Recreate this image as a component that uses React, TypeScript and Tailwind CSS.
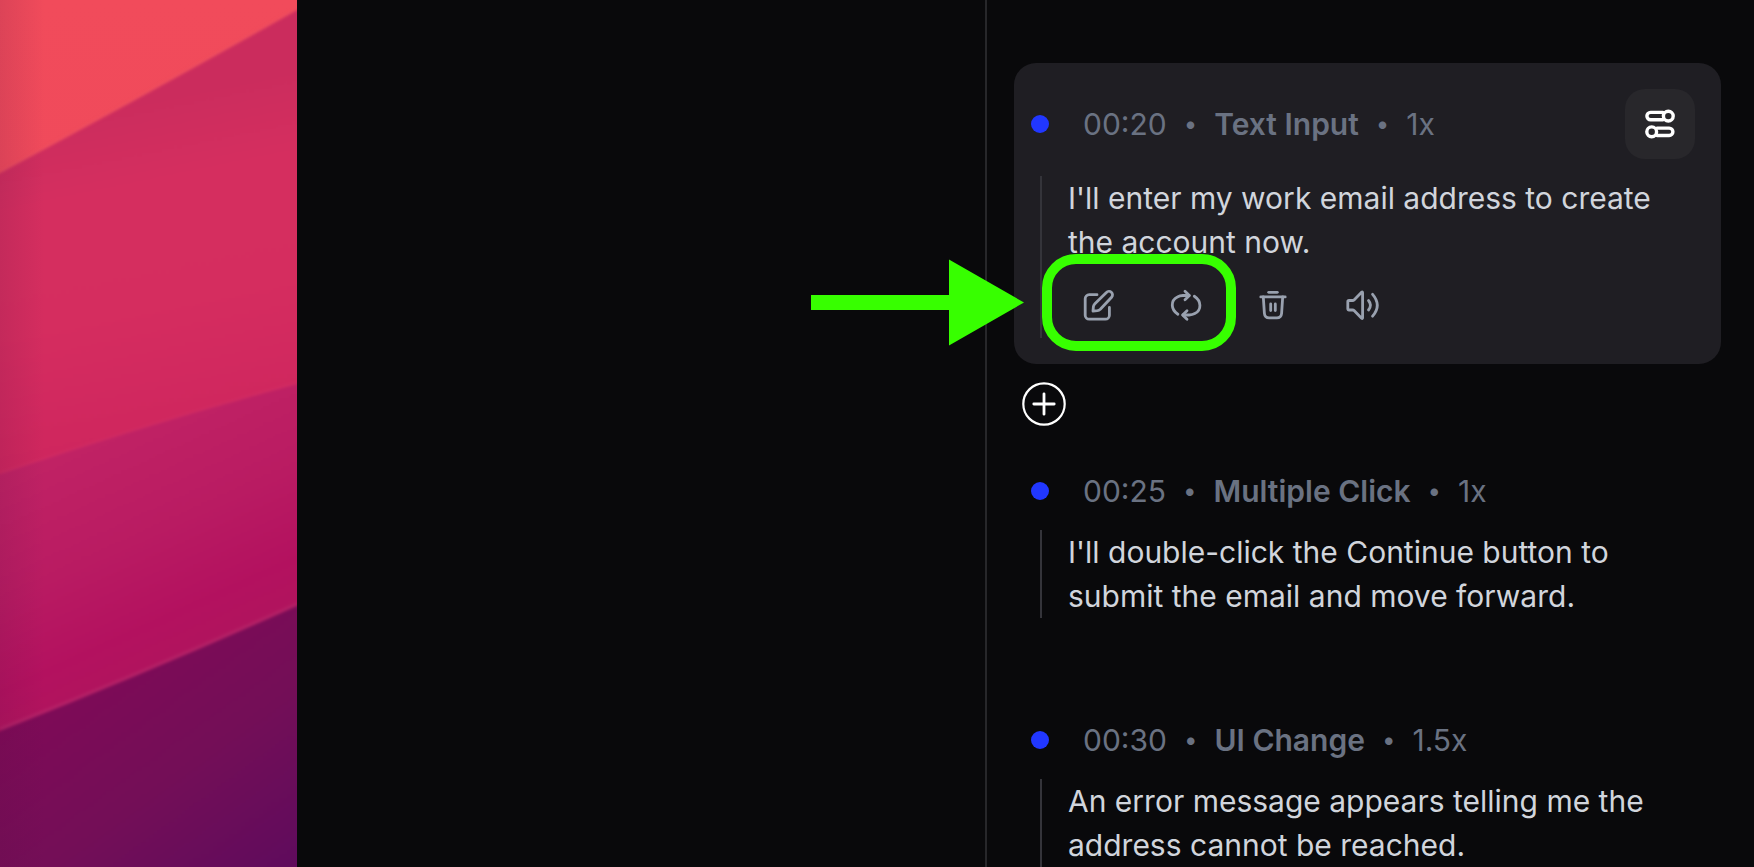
import type { ReactNode } from "react";

type Step = {
  time: string;
  kind: string;
  speed: string;
  text: string;
};

const steps: Step[] = [
  { time: "00:20", kind: "Text Input", speed: "1x", text: "I'll enter my work email address to create the account now." },
  { time: "00:25", kind: "Multiple Click", speed: "1x", text: "I'll double-click the Continue button to submit the email and move forward." },
  { time: "00:30", kind: "UI Change", speed: "1.5x", text: "An error message appears telling me the address cannot be reached." },
];

function Wallpaper() {
  return (
    <svg className="block h-full w-full" viewBox="0 0 297 867" preserveAspectRatio="none" aria-hidden="true">
      <defs>
        <linearGradient id="coral" x1="0" y1="0" x2="0" y2="1">
          <stop offset="0" stopColor="#f14b5b" />
          <stop offset="1" stopColor="#ec465b" />
        </linearGradient>
        <linearGradient id="rose" gradientUnits="userSpaceOnUse" x1="120" y1="108" x2="185" y2="425">
          <stop offset="0" stopColor="#cb2c5d" />
          <stop offset="0.25" stopColor="#d52e5f" />
          <stop offset="0.6" stopColor="#d52d5f" />
          <stop offset="1" stopColor="#cf265e" />
        </linearGradient>
        <linearGradient id="magenta" gradientUnits="userSpaceOnUse" x1="90" y1="440" x2="190" y2="660">
          <stop offset="0" stopColor="#c02264" />
          <stop offset="0.45" stopColor="#b91b62" />
          <stop offset="0.8" stopColor="#b3115f" />
          <stop offset="1" stopColor="#b0145d" />
        </linearGradient>
        <linearGradient id="plum" gradientUnits="userSpaceOnUse" x1="90" y1="670" x2="250" y2="890">
          <stop offset="0" stopColor="#7e0a57" />
          <stop offset="0.5" stopColor="#730e57" />
          <stop offset="1" stopColor="#600b5c" />
        </linearGradient>
        <linearGradient id="shade" x1="0" y1="0" x2="1" y2="0">
          <stop offset="0" stopColor="#501040" stopOpacity="0.13" />
          <stop offset="0.15" stopColor="#501040" stopOpacity="0" />
        </linearGradient>
        <filter id="soften" x="-5%" y="-5%" width="110%" height="110%" colorInterpolationFilters="sRGB">
          <feGaussianBlur stdDeviation="1.4" />
        </filter>
      </defs>
      <rect width="297" height="867" fill="url(#coral)" />
      <g filter="url(#soften)">
        <path d="M-20 184 L0 173 Q148 94 297 10 L320 -3 V900 H-20Z" fill="url(#rose)" />
        <path d="M-20 479 L0 474 Q155 422 297 384 L320 378 V900 H-20Z" fill="url(#magenta)" />
        <path d="M-20 739 L0 731 Q150 672 297 606 L320 595 V900 H-20Z" fill="url(#plum)" />
        <path d="M0 172 Q148 93 297 9" fill="none" stroke="#f06070" strokeOpacity="0.25" strokeWidth="2" />
        <path d="M0 473 Q155 421 297 383" fill="none" stroke="#e0487a" strokeOpacity="0.2" strokeWidth="2" />
        <path d="M0 729 Q150 670 297 604" fill="none" stroke="#c0407a" strokeOpacity="0.35" strokeWidth="3" />
      </g>
      <rect width="297" height="867" fill="url(#shade)" />
    </svg>
  );
}

function Icon({ children }: { children: ReactNode }) {
  return (
    <svg
      className="size-9"
      viewBox="0 0 36 36"
      fill="none"
      stroke="currentColor"
      strokeWidth="2.8"
      strokeLinecap="round"
      strokeLinejoin="round"
      aria-hidden="true"
    >
      {children}
    </svg>
  );
}

function SettingsIcon() {
  return (
    <Icon>
      <g strokeWidth="3.4">
        <path d="M21 6.4 H8.6 A3.7 3.7 0 0 0 8.6 13.8 H21" />
        <circle cx="26.3" cy="10.1" r="4.9" />
        <path d="M15 22.1 H27.2 A3.7 3.7 0 0 1 27.2 29.5 H15" />
        <circle cx="9.7" cy="25.8" r="4.9" />
      </g>
    </Icon>
  );
}

function EditIcon() {
  return (
    <Icon>
      <path d="M17 7.7 H9.2 A4 4 0 0 0 5.2 11.7 V28.2 A4 4 0 0 0 9.2 32.2 H25.4 A4 4 0 0 0 29.4 28.2 V20.5" />
      <path d="M26.4 5.5 A3.3 3.3 0 0 1 31.6 10.2 L20.3 22.2 Q19 23.4 17.4 23.6 L13 24 L13.4 19.6 Q13.7 18 14.9 16.8Z" />
    </Icon>
  );
}

function RegenerateIcon() {
  return (
    <Icon>
      <path d="M9.9 27.3 C2.6 22.6 2.4 13.4 9.4 9.9 Q11.8 8.6 15 8.5 H21" />
      <path d="M17 4.3 L21.4 8.5 L17 12.8" />
      <path d="M26.3 9.2 C33.6 13.9 33.8 23.1 26.8 26.6 Q24.4 27.9 21.2 28 H15" />
      <path d="M19 23.8 L14.6 28 L19 32.3" />
    </Icon>
  );
}

function TrashIcon() {
  return (
    <Icon>
      <path d="M12.7 5.3 H21.3" />
      <path d="M4.8 9.9 H29.2" />
      <path d="M7.3 10 L8.4 26.4 Q8.8 30.9 13.2 30.9 H20.8 Q25.2 30.9 25.6 26.4 L26.7 10" />
      <path d="M14.7 17 V23.6 M19.3 17 V23.6" />
    </Icon>
  );
}

function SpeakerIcon() {
  return (
    <Icon>
      <path d="M5 13.5 H8.5 Q9.5 13.5 10.3 12.7 L17.6 5.2 Q18.6 4.4 18.6 5.7 V30.8 Q18.6 32 17.6 31.2 L10.3 23.8 Q9.5 23 8.5 23 H5 Q3.8 23 3.8 21.8 V14.7 Q3.8 13.5 5 13.5Z" />
      <path d="M24.5 13.5 Q28.4 18.2 24.5 23" />
      <path d="M28.6 7.3 Q38 18.2 28.6 29.2" />
    </Icon>
  );
}

function Separator() {
  return <span className="text-2xl">•</span>;
}

function StepHeader({ step, tall }: { step: Step; tall?: boolean }) {
  return (
    <header className={tall ? "flex h-[70px] items-center" : "flex h-11 items-center"}>
      <span className="size-[18px] shrink-0 rounded-full bg-[#2137ff]" />
      <div className="ml-[34px] flex grow items-center gap-[17px] text-[30px] leading-[44px] text-gray-500">
        <time>{step.time}</time>
        <Separator />
        <h2 className="font-semibold">{step.kind}</h2>
        <Separator />
        <span>{step.speed}</span>
      </div>
      {tall && (
        <button
          type="button"
          aria-label="Step settings"
          className="flex size-[70px] items-center justify-center rounded-[20px] bg-[#28272b] text-white"
        >
          <SettingsIcon />
        </button>
      )}
    </header>
  );
}

function Action({ label, children }: { label: string; children: ReactNode }) {
  return (
    <button type="button" aria-label={label} className="flex h-full w-[88px] items-center justify-center">
      {children}
    </button>
  );
}

function Callout() {
  return (
    <div className="pointer-events-none absolute -top-2.5 left-0 h-[97px] w-[194px] rounded-[34px] border-10 border-[#37ff00]">
      <svg
        className="absolute top-[-5px] right-[202px] h-[87px] w-[213px]"
        viewBox="0 0 213 87"
        fill="#37ff00"
        aria-hidden="true"
      >
        <path d="M0 36 H138 V0.5 L213 43.5 L138 86.5 V51 H0Z" />
      </svg>
    </div>
  );
}

function StepBody({ step, editable }: { step: Step; editable?: boolean }) {
  return (
    <div className="relative mt-[17px] ml-[9px] border-l-2 border-[#34343a]">
      <p className="max-w-[620px] pl-[26px] text-[30px] leading-[44px] text-gray-300">{step.text}</p>
      {editable && (
        <div className="relative flex h-[74px] pt-2 pl-3 text-gray-400">
          <Action label="Edit text">
            <EditIcon />
          </Action>
          <Action label="Regenerate text">
            <RegenerateIcon />
          </Action>
          <Action label="Delete step">
            <TrashIcon />
          </Action>
          <Action label="Play voiceover">
            <SpeakerIcon />
          </Action>
          <Callout />
        </div>
      )}
    </div>
  );
}

export default function App() {
  return (
    <main className="grid h-screen grid-cols-[297fr_688fr_769fr] overflow-hidden bg-[#09090b] font-[Inter,sans-serif]">
      <div className="h-screen">
        <Wallpaper />
      </div>
      <div />
      <section aria-label="Steps" className="h-screen border-l-2 border-[#27272a] pt-[63px] pr-[33px] pl-[27px]">
        <article className="rounded-[22px] bg-[#1f1e23] py-[26px] pr-[26px] pl-[17px]">
          <StepHeader step={steps[0]} tall />
          <StepBody step={steps[0]} editable />
        </article>

        <button type="button" aria-label="Add step" className="mt-[18px] ml-2 block text-white">
          <svg className="size-11" viewBox="0 0 44 44" fill="none" stroke="currentColor" strokeWidth="2.2" strokeLinecap="round" aria-hidden="true">
            <circle cx="22" cy="22" r="20.7" />
            <path strokeWidth="2.8" d="M22 11.8 V32.2 M11.8 22 H32.2" />
          </svg>
        </button>

        <article className="mt-[43px] px-[17px]">
          <StepHeader step={steps[1]} />
          <StepBody step={steps[1]} />
        </article>

        <article className="mt-[100px] px-[17px]">
          <StepHeader step={steps[2]} />
          <StepBody step={steps[2]} />
        </article>
      </section>
    </main>
  );
}
